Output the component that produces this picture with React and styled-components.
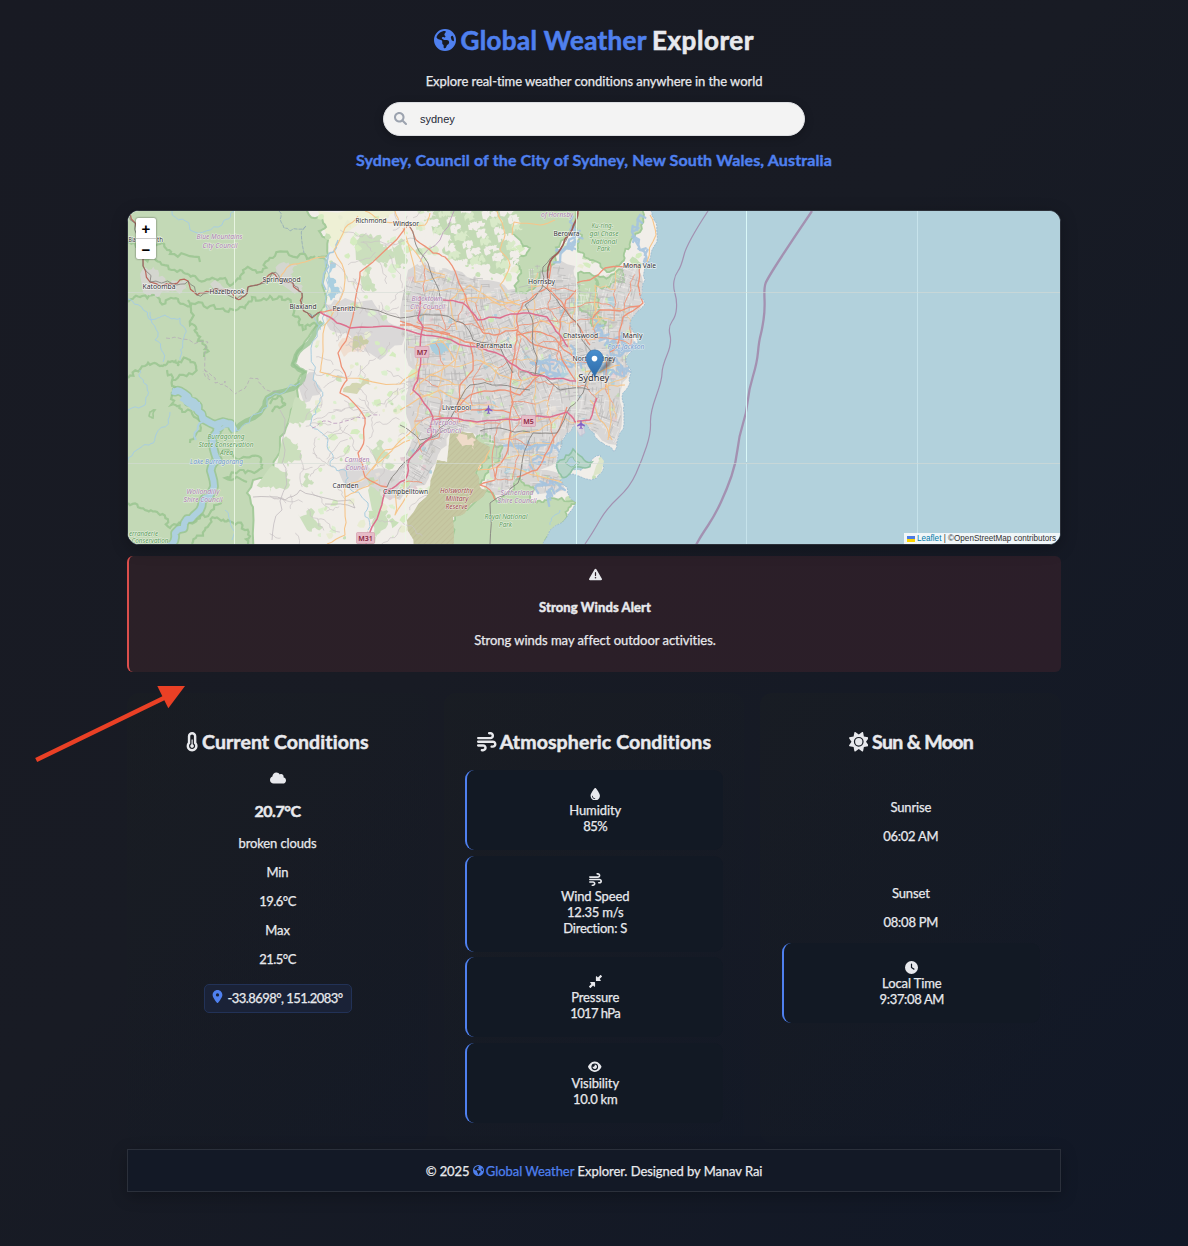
import React from 'react';
import styled, { createGlobalStyle } from 'styled-components';
import {
  FaEarthAmericas, FaTriangleExclamation, FaCloud, FaWind,
  FaDroplet, FaDownLeftAndUpRightToCenter, FaEye, FaSun, FaClock, FaLocationDot,
} from 'react-icons/fa6';

const BLUE = '#4f80ef';
const TEXT = '#e8e9ed';

const GlobalStyle = createGlobalStyle`
  *, *::before, *::after { box-sizing: border-box; }
  body {
    margin: 0;
    min-height: 1246px;
    background: linear-gradient(135deg, #181a23 0%, #181b24 45%, #111827 100%);
    color: ${TEXT};
    font: 400 13px/16px Lato, "Open Sans", sans-serif;
    -webkit-text-stroke: 0.25px currentColor;
  }
  svg { display: block; }
`;

const Page = styled.div`
  position: relative;
  width: 934px;
  height: 1246px;
  margin: 0 auto;
  padding-top: 24px;
`;
const Header = styled.header`
  display: flex;
  flex-direction: column;
  align-items: center;
  height: 186px;
`;
const Title = styled.h1`
  display: flex;
  align-items: center;
  gap: 5px;
  margin: 0;
  font-size: 26px;
  line-height: 32px;
  font-weight: 700;
  letter-spacing: 0.36px;
  -webkit-text-stroke-width: 0.6px;
  white-space: pre;
`;
const Accent = styled.span`
  color: ${BLUE};
`;
const Brand = styled.span`
  display: inline-flex;
  align-items: center;
  gap: ${(p) => p.$gap}px;
  color: ${BLUE};
`;
const Spaced = styled.span`
  letter-spacing: ${(p) => p.$ls}px;
`;
const Subtitle = styled.p`
  margin: 17px 0 13px;
  letter-spacing: -0.06px;
`;
const Search = styled.div`
  display: flex;
  align-items: center;
  gap: 13px;
  width: 422px;
  height: 34px;
  padding-left: 10px;
  border: 1px solid #dcdee2;
  border-radius: 17px;
  background: #f3f3f3;
  color: #1f2937;
  font: 11px/14px "Liberation Sans", sans-serif;
  -webkit-text-stroke-width: 0;
  box-shadow: 0 2px 8px rgba(0, 0, 0, 0.25);
  svg { color: #9ca3af; margin-top: -2px; }
`;
const Place = styled.h2`
  margin: 14px 0 0;
  color: ${BLUE};
  font-size: 16px;
  line-height: 20px;
  letter-spacing: 0.14px;
  -webkit-text-stroke-width: 0.4px;
`;
const MapFrame = styled.section`
  position: relative;
  height: 335px;
  border: 1px solid #2c3039;
  border-radius: 12px;
  overflow: hidden;
  background: #b2d1dc;
  box-shadow: 0 4px 16px rgba(0, 0, 0, 0.25);
  -webkit-text-stroke-width: 0;
`;
const ZoomControl = styled.div`
  position: absolute;
  top: 7px;
  left: 8px;
  width: 20px;
  border-radius: 2px;
  background: #fff;
  box-shadow: 0 0 2px rgba(0, 0, 0, 0.65);
`;
const ZoomButton = styled.div`
  display: flex;
  align-items: center;
  justify-content: center;
  height: ${(p) => (p.$first ? 21 : 20)}px;
  padding-top: 2px;
  border-bottom: ${(p) => (p.$first ? '1px solid #ccc' : 'none')};
  color: #000;
  font: 700 15px/18px "Liberation Sans", sans-serif;
`;
const Attribution = styled.div`
  position: absolute;
  right: 0;
  bottom: 0;
  display: flex;
  align-items: center;
  gap: 2px;
  width: 156px;
  height: 11px;
  padding-left: 3px;
  background: rgba(255, 255, 255, 0.8);
  color: #333;
  font: 8.13px/11px "Liberation Sans", sans-serif;
  white-space: pre;
`;
const LeafletLink = styled.span`
  color: #0078a8;
`;
const Alert = styled.section`
  display: flex;
  flex-direction: column;
  align-items: center;
  height: 116px;
  margin-top: 11px;
  padding-top: 12px;
  border-left: 2px solid #dc4f4c;
  border-radius: 6px;
  background: linear-gradient(120deg, #2b2027, #2b1e29);
`;
const AlertTitle = styled.h3`
  margin: 18px 0 0;
  font-size: 13px;
  line-height: 16px;
  font-weight: 700;
  letter-spacing: 0.1px;
  -webkit-text-stroke-width: 0.5px;
`;
const AlertText = styled.p`
  margin: 17px 0 0;
  letter-spacing: -0.03px;
`;
const Cards = styled.main`
  display: grid;
  grid-template-columns: repeat(3, 1fr);
  gap: 16px;
  margin-top: 21px;
`;
const Card = styled.section`
  display: flex;
  flex-direction: column;
  align-items: center;
  height: 450px;
  padding: 37px 21px 0 21.4px;
  border-radius: 12px;
  background: linear-gradient(135deg, rgba(26, 30, 34, 0.5), rgba(17, 24, 39, 0.3));
`;
const CardTitle = styled.h2`
  display: flex;
  align-items: center;
  gap: ${(p) => p.$gap}px;
  margin: 0;
  font-size: 19.5px;
  line-height: 24px;
  font-weight: 700;
  letter-spacing: ${(p) => p.$ls}px;
  -webkit-text-stroke-width: 0.5px;
  white-space: nowrap;
`;
const CloudIcon = styled(FaCloud)`
  margin-top: 16px;
`;
const Temperature = styled.strong`
  margin: 15px 0 8px;
  font-size: 16px;
  line-height: 20px;
  letter-spacing: -0.48px;
  -webkit-text-stroke-width: 0.5px;
`;
const Reading = styled.p`
  margin: ${(p) => p.$top ?? 13}px 0 0;
  letter-spacing: ${(p) => p.$ls ?? -0.12}px;
`;
const Coordinates = styled.div`
  display: flex;
  align-items: center;
  gap: 4px;
  width: 148px;
  height: 29px;
  margin-top: 17.2px;
  padding-left: 6px;
  border: 1px solid #223257;
  border-radius: 5px;
  background: #1a2237;
  letter-spacing: -0.55px;
  white-space: nowrap;
  svg { color: ${BLUE}; margin-top: -3px; }
`;
const Rows = styled.div`
  display: flex;
  flex-direction: column;
  gap: 5.5px;
  width: 100%;
  margin-top: ${(p) => p.$top}px;
`;
const Row = styled.div`
  display: flex;
  flex-direction: column;
  align-items: center;
  padding: 16px 0;
  border-left: 2px solid ${BLUE};
  border-radius: 9px;
  background: #121924;
`;
const RowIcon = styled.div`
  display: flex;
  align-items: center;
  height: 16px;
`;
const Footer = styled.footer`
  display: flex;
  align-items: center;
  justify-content: center;
  height: 43px;
  margin-top: 6px;
  border: 1px solid #2b303b;
  background: #131926;
  box-shadow: 0 4px 16px rgba(0, 0, 0, 0.25);
  letter-spacing: -0.06px;
  white-space: pre;
`;
const ArrowOverlay = styled.svg`
  position: absolute;
  left: -107px;
  top: 680px;
`;

function SearchIcon() {
  return (
    <svg width="13" height="13" viewBox="0 0 512 512" fill="currentColor">
      <path d="M500.3 443.7l-119.7-119.7c27.22-40.41 40.65-90.9 33.46-144.7C401.8 87.79 326.8 13.32 235.2 1.723C99.01-15.51-15.51 99.01 1.724 235.2c11.6 91.64 86.08 166.7 177.6 178.9c53.8 7.189 104.3-6.236 144.7-33.46l119.7 119.7c15.62 15.62 40.95 15.62 56.57 0C515.9 484.7 515.9 459.3 500.3 443.7zM79.1 208c0-70.58 57.42-128 128-128s128 57.42 128 128c0 70.58-57.42 128-128 128S79.1 278.6 79.1 208z" />
    </svg>
  );
}
function ThermometerIcon() {
  return (
    <svg width="12.2" height="19.5" viewBox="0 0 320 512" fill="currentColor">
      <path d="M176 322.9l.0002-114.9c0-8.75-7.25-16-16-16s-15.1 7.25-15.1 16L144 322.9c-18.62 6.625-32 24.25-32 45.13c0 26.5 21.5 48 48 48s48-21.5 48-48C208 347.1 194.6 329.5 176 322.9zM272 278.5V112c0-61.87-50.12-112-111.1-112S48 50.13 48 112v166.5c-19.75 24.75-32 55.5-32 89.5c0 79.5 64.5 143.1 144 143.1S304 447.5 304 368C304 334 291.8 303.1 272 278.5zM160 448c-44.13 0-80-35.87-80-79.1c0-25.5 12.25-48.88 32-63.75v-192.3c0-26.5 21.5-48 48-48s48 21.5 48 48v192.3c19.75 14.75 32 38.25 32 63.75C240 412.1 204.1 448 160 448z" />
    </svg>
  );
}

/* ---------- map geometry ---------- */
function makeRandom(seed) {
  let s = seed;
  return () => {
    s = (s * 1664525 + 1013904223) % 4294967296;
    return s / 4294967296;
  };
}
const parse = (str) => str.trim().split(/\s+/).map((p) => p.split(',').map(Number));

function roughen(points, amount, depth, rnd) {
  let pts = points;
  for (let d = 0; d < depth; d += 1) {
    const next = [pts[0]];
    for (let i = 1; i < pts.length; i += 1) {
      const [ax, ay] = pts[i - 1];
      const [bx, by] = pts[i];
      const len = Math.hypot(bx - ax, by - ay) || 1;
      const off = ((rnd() - 0.5) * Math.min(len * amount, 8)) / len;
      next.push([(ax + bx) / 2 - (by - ay) * off, (ay + by) / 2 + (bx - ax) * off]);
      next.push([bx, by]);
    }
    pts = next;
  }
  return pts;
}
function path(str, amount = 0, depth = 0, close = false, seed = 7) {
  const pts = depth ? roughen(parse(str), amount, depth, makeRandom(seed)) : parse(str);
  return `M${pts.map((p) => `${p[0].toFixed(1)},${p[1].toFixed(1)}`).join('L')}${close ? 'Z' : ''}`;
}
function smooth(str) {
  const p = parse(str);
  let d = `M${p[0]}`;
  for (let i = 1; i < p.length - 1; i += 1) {
    d += `Q${p[i]} ${(p[i][0] + p[i + 1][0]) / 2},${(p[i][1] + p[i + 1][1]) / 2}`;
  }
  return `${d}L${p[p.length - 1]}`;
}
function inside([x, y], poly) {
  let hit = false;
  for (let i = 0, j = poly.length - 1; i < poly.length; j = i, i += 1) {
    const [xi, yi] = poly[i];
    const [xj, yj] = poly[j];
    if (yi > y !== yj > y && x < ((xj - xi) * (y - yi)) / (yj - yi) + xi) hit = !hit;
  }
  return hit;
}
const LAND = '110,195 652,195 651,211 654,220 657,233 652,250 648,263 645,280 640,297 645,303 638,311 630,323 634,333 638,343 631,352 626,362 631,370 630,383 622,397 624,413 620,433 614,452 603,443 594,433 586,424 574,426 567,433 560,450 556,467 562,474 573,470 588,466 600,455 604,467 597,478 573,474 560,480 567,487 570,498 577,502 567,517 547,537 540,560 110,560';
const FOREST = '110,195 306,195 309,215 322,218 326,227 319,231 328,240 328,255 318,257 327,262 325,293 322,310 316,326 302,348 293,363 305,372 297,390 290,417 280,437 277,457 267,477 253,480 247,493 253,507 252,560 110,560';
const URBAN = '408,270 425,262 440,268 462,272 488,280 508,290 522,285 528,268 545,262 575,266 578,283 600,284 622,266 640,262 644,290 640,310 632,325 634,343 626,356 630,372 620,395 622,420 617,445 590,430 567,433 556,462 540,470 565,478 565,490 540,494 520,480 500,495 485,488 492,450 475,434 450,433 438,455 425,485 400,500 378,496 360,480 372,470 398,470 412,440 405,410 414,370 404,345 400,310';
const SMALL_TOWNS = ['325,305 345,298 372,300 386,318 402,325 402,345 380,360 362,345 347,333 327,325', '140,274 158,270 176,281 188,280 188,290 170,291 158,297 143,292', '210,284 230,287 248,290 238,300 219,296', '270,276 284,262 297,266 292,278 302,285 295,294', '338,470 358,460 372,470 380,486 358,490 343,482', '298,385 315,372 322,390 304,403'];
const PARKS = ['500,222 520,205 578,205 580,225 560,244 556,262 540,272 527,292 516,292 521,270 514,262 530,248 520,240', '577,205 647,205 640,232 630,247 622,262 607,272 590,260 577,250 582,235 575,225', '578,273 600,277 622,270 624,282 604,288 595,278 598,303 593,315 606,322 604,329 592,326 588,313 580,310', '425,205 520,205 525,225 508,236 514,250 505,272 493,274 475,262 460,262 442,250 450,237 432,228', '487,490 497,502 520,478 533,487 533,503 547,500 576,502 567,517 547,537 540,560 450,560 455,513 467,510', '475,440 490,436 503,446 498,462 484,480 474,484 476,472 489,458'];
const GREEN_PATCHES = ['355,240 365,234 382,238 386,250 371,263 356,260', '370,250 386,244 394,252 386,268 373,262', '392,246 405,241 408,260 397,268', '360,275 372,268 377,290 362,288', '294,400 305,400 312,414 300,428 288,424', '282,440 298,443 302,455 288,467 277,465', '268,470 288,470 290,485 270,492 255,488', '300,483 310,474 314,482 305,487', '298,514 315,512 323,527 307,530', '370,448 384,442 390,455 376,462', '368,490 382,490 388,520 370,545 372,510'];
const RESERVE = '450,433 473,433 490,447 488,460 475,473 480,487 487,490 467,510 453,517 448,560 412,560 407,520 430,487 437,460 447,462';

const MOTORWAYS = ['320,312 337,323 350,328 373,327 410,331 440,337 480,347 510,363 533,375 550,379 577,381', '443,300 463,303 478,320 500,318 523,313 547,317 560,335 568,347', '420,296 418,318 423,327 420,350 419,370 413,390 433,417 431,437 409,460 405,480 387,490 380,510 366,544', '432,420 450,418 477,422 517,420 545,417 567,412 575,422 590,420 597,398'];
const TRUNKS = ['407,226 360,272 357,290 350,327 338,353 347,380 340,393 365,418 364,440 358,453 365,477 387,487', '408,224 416,240 433,253 445,257 457,277 467,303 483,333', '400,325 440,333 473,343 500,350', '350,308 335,310 320,312', '550,260 547,288 523,303 517,315 517,340 512,365 513,403 510,425 508,450 497,467 495,480 480,485 490,490 495,500', '547,288 565,308 580,328 590,345', '577,283 590,280 605,268 640,266 638,285 643,303 623,317 617,347 610,352', '593,318 600,310 640,306', '577,289 566,300 560,320 561,345', '483,333 495,335 517,330 535,345 560,352 575,380', '455,412 470,395 500,390 520,395 540,375', '455,412 480,410 510,413', '567,407 548,450 537,470 517,477', '470,342 473,370 460,385 457,410', '517,335 540,332 555,338 575,358', '400,321 420,329 450,334'];
const SECONDARY = ['365,211 378,219 385,222 405,224', '358,216 345,228 334,250 345,280 340,300 325,325 322,360 320,372 345,378 400,384 420,370', '430,213 425,225 400,226 395,211', '403,228 415,282 445,277', '497,211 505,235 500,250 510,265 500,285 508,300 520,305', '520,305 490,297 460,300', '405,240 425,268 445,275', '650,215 656,235 647,262', '592,330 600,320 595,285', '457,330 450,300 470,285 500,305 520,300', '440,340 455,360 430,375', '410,395 430,375 455,385', '365,477 387,455 405,437 420,422', '365,478 345,485 345,510 345,535 327,544', '378,480 358,490 345,497', '400,410 440,390 470,405', '490,450 478,470 500,467 520,470 535,475 567,485', '500,440 540,430 560,415', '480,360 500,375 525,380 545,372', '595,395 610,385 625,385', '590,400 600,420 612,440', '605,380 610,400 608,440', '530,340 540,320 560,330', '585,372 600,372 620,365', '512,235 514,222 540,225 555,220', '395,490 395,515 410,490', '280,279 290,265 305,262 325,257', '410,440 385,450 372,470'];
const RAILS = ['410,227 416,245 430,270 440,297', '355,307 400,318 433,315 463,323 473,340 500,347 513,373', '578,213 572,230 560,250 543,267 542,288 525,305 533,323 537,357 535,375', '542,285 560,305 580,328 582,340 595,360 583,393 570,407 557,433 533,433 523,457 518,483 490,503 490,544', '520,372 545,376 560,390 590,390', '400,425 420,440 435,435 455,410 470,385 500,385 530,390', '387,487 400,467 420,445 450,428', '480,431 500,428 530,432'];
const MOUNTAIN_ROAD = '130,213 137,235 143,260 150,282 173,284 188,281 197,295 210,292 223,290 237,299 243,297 248,287 260,284 272,273 282,281 293,283 302,293 302,308 312,318 320,312';
const LAKE = '172,391 183,393 198,406 207,421 223,422 235,431';
const LAKE_SOUTH = '219,424 217,432 213,445 218,460 212,475 209,497 200,510 187,519 175,533 168,546';
const STREAMS = ['120,300 147,312 150,320 165,315 180,318 183,340 180,360', '120,415 145,405 147,385 140,370', '120,470 140,448 155,438 170,412', '172,211 190,230 222,225 235,211', '300,383 267,398 262,412 235,431', '328,255 326,295 317,330 313,380 320,402 310,425 328,440 330,465 345,470 345,486 368,503 368,530', '150,312 155,340 163,362', '310,315 320,330', '225,510 232,540', '550,525 560,510'];
const BOUNDARY_NEAR = '708,211 687,243 681,267 675,275 673,287 677,300 676,316 668,327 672,343 662,367 662,380 650,413 651,433 642,460 630,487 607,508 593,532 585,544';
const BOUNDARY_FAR = '812,211 797,233 767,279 764,288 765,310 762,330 759,341 757,363 749,389 746.5,413 739,436 736,463 727,489 715,515 701,536 696,545';

const urbanPoly = parse(URBAN);
const landPoly = parse(LAND);
const forestPoly = parse(FOREST);
function buildStreets() {
  const rnd = makeRandom(42);
  const grey = [];
  const white = [];
  for (let i = 0; i < 2600; i += 1) {
    const x = 398 + rnd() * 250;
    const y = 262 + rnd() * 236;
    const tilt = 0.25 * Math.sin(x / 30) + 0.3 * Math.cos(y / 37) + (rnd() < 0.5 ? Math.PI / 2 : 0);
    const len = 3 + rnd() * 11;
    const x2 = x + Math.cos(tilt) * len;
    const y2 = y + Math.sin(tilt) * len;
    if (inside([x, y], urbanPoly) && inside([x2, y2], urbanPoly)) {
      (rnd() < 0.5 ? grey : white).push(`M${x.toFixed(1)},${y.toFixed(1)}L${x2.toFixed(1)},${y2.toFixed(1)}`);
    }
  }
  return [grey.join(''), white.join('')];
}
/* arterial network: jittered nodes linked to their right and lower neighbours */
function buildArterials() {
  const rnd = makeRandom(314);
  const step = 19;
  const nodes = [];
  for (let r = 0; r < 13; r += 1) {
    nodes.push(Array.from({ length: 13 }, (_, c) => [402 + c * step + (rnd() - 0.5) * 13, 268 + r * step + (rnd() - 0.5) * 13]));
  }
  const out = { major: '', minor: '' };
  const link = (a, b, seed) => {
    if (!b || !inside(a, urbanPoly) || !inside(b, urbanPoly)) return;
    const roll = rnd();
    if (roll > 0.8) return;
    out[roll < 0.3 ? 'major' : 'minor'] += path(`${a} ${b}`, 0.35, 2, false, seed);
  };
  nodes.forEach((row, r) => row.forEach((n, c) => {
    link(n, row[c + 1], r * 31 + c);
    link(n, nodes[r + 1] && nodes[r + 1][c], r * 37 + c + 500);
  }));
  return out;
}
function buildPatches() {
  const rnd = makeRandom(99);
  const list = [];
  const colors = ['#cbe6b6', '#d5edc3', '#c3d9b6', '#e6e0d9', '#cfcdc9', '#e2ccd0', '#b2d1dc'];
  for (let i = 0; i < 760; i += 1) {
    const x = 315 + rnd() * 330;
    const y = 213 + rnd() * 328;
    const urban = inside([x, y], urbanPoly);
    if (!inside([x, y], landPoly) || (!urban && rnd() < 0.35) || inside([x, y], forestPoly)) continue;
    const c = urban ? colors[Math.floor(rnd() * 7)] : ['#d5ecc0', '#c8e0b8', '#dcefce', '#e8ecd2'][Math.floor(rnd() * 4)];
    const r = 1.2 + rnd() * (urban ? 3 : 3.6);
    const pts = Array.from({ length: 7 }, (_, k) => {
      const a = (k / 7) * Math.PI * 2;
      const q = r * (0.5 + rnd() * 0.8);
      return `${(x + Math.cos(a) * q).toFixed(1)},${(y + Math.sin(a) * q).toFixed(1)}`;
    });
    list.push({ d: `M${pts.join('L')}Z`, c });
  }
  return list;
}
function buildRural() {
  const rnd = makeRandom(5);
  let d = '';
  for (let i = 0; i < 130; i += 1) {
    const x = 265 + rnd() * 150;
    const y = 215 + rnd() * 325;
    if (inside([x, y], forestPoly) || inside([x, y], urbanPoly)) continue;
    const a = rnd() * 6.28;
    const l = 10 + rnd() * 28;
    const end = [x + Math.cos(a) * l, y + Math.sin(a) * l];
    if (inside(end, forestPoly)) continue;
    d += path(`${x},${y} ${end}`, 0.5, 3, false, i + 3);
  }
  return d;
}
function buildInlets() {
  const rnd = makeRandom(21);
  let d = '';
  const arms = ['642,343 625,350 612,357 597,363 580,362 562,365 545,360 533,364', '560,375 550,372 540,368', '612,357 620,372 628,368', '615,350 608,340 601,330 597,322', '625,346 622,336', '580,362 575,350', '596,363 605,372 620,375', '510,445 525,450 545,445 558,450', '530,465 545,455', '535,488 550,484 565,490', '548,500 552,488', '570,222 575,240 562,250', '640,215 632,232 640,250 646,262', '560,262 577,236'];
  arms.forEach((arm) => {
    roughen(parse(arm), 0.5, 2, rnd).forEach(([x, y]) => {
      const a = rnd() * 6.28;
      d += `M${x.toFixed(1)},${y.toFixed(1)}l${(Math.cos(a) * 6).toFixed(1)},${(Math.sin(a) * 6).toFixed(1)}`;
    });
    d += path(arm, 0.5, 2, false, 31);
  });
  return d;
}
const [streetsGrey, streetsWhite] = buildStreets();
const arterials = buildArterials();
const patches = buildPatches();
const rural = buildRural();
const inlets = buildInlets();

const TOWNS = [
  ['Richmond', 371, 223, 31], ['Windsor', 406, 226, 26], ['Katoomba', 159, 289, 33], ['Hazelbrook', 227, 294, 35],
  ['Springwood', 281.5, 282, 38], ['Blaxland', 303, 308.5, 27], ['Penrith', 344, 311, 23], ['Berowra', 566.5, 236, 26],
  ['Mona Vale', 639.5, 267.5, 33], ['Hornsby', 541.5, 283.5, 27], ['Chatswood', 580.5, 338, 35], ['Manly', 632.5, 338, 20],
  ['Parramatta', 494, 348, 36], ['North Sydney', 594, 360.5, 43], ['Liverpool', 456.5, 409.5, 29], ['Camden', 345.5, 488, 26], ['Campbelltown', 405.5, 494, 45],
  ['Bla', 132, 242, 7], ['th', 160, 242, 6],
];
const REGIONS = [
  ['Blue Mountains', 219.5, 239, 46, 0], ['City Council', 220, 247.5, 35, 0], ['Blacktown', 427, 301, 31, 0], ['City Council', 427.5, 308.5, 35, 0],
  ['Liverpool', 444, 424.5, 28, 0], ['City Council', 444, 432.5, 35, 0], ['Camden', 357, 461.5, 25, 0], ['Council', 356.5, 470, 22, 0],
  ['Wollondilly', 203, 494, 33, 0], ['Shire Council', 203, 501.5, 39, 0], ['Sutherland', 517, 495, 33, 0], ['Shire Council', 517, 503, 39, 0],
  ['of Hornsby', 557, 216.5, 32, 0],
  ['Burragorang', 226, 438.5, 37, 1], ['State Conservation', 226, 446.5, 55, 1], ['Area', 226.5, 454.5, 13, 1],
  ['Ku-ring-', 602.5, 227.5, 22, 1], ['gai Chase', 604, 235.5, 29, 1], ['National', 604, 243.5, 26, 1], ['Park', 603.5, 251, 13, 1],
  ['Royal National', 506, 518.5, 43, 1], ['Park', 505.5, 526.5, 13, 1], ['erranderie', 143.5, 536, 29, 1], ['Conservation', 150, 542.9, 37, 1],
  ['Lake Burragorang', 216.5, 463.5, 53, 2], ['Port Jackson', 626, 349, 37, 2],
  ['Holsworthy', 456.5, 492.5, 33, 3], ['Military', 457, 500.5, 23, 3], ['Reserve', 456.5, 508.5, 22, 3],
];
const REGION_COLORS = ['#ab7fae', '#5b9b58', '#6f97cb', '#a1464c'];
const SHIELDS = [['M7', 422, 352], ['M5', 528.5, 421], ['M31', 365.5, 538]];
const PLANE = 'M0,-4.2C.6,-4.2 .7,-3 .7,-1.4L4,1V2L.7,1V3L1.7,3.8V4.4L0,4L-1.7,4.4V3.8L-.7,3V1L-4,2V1L-.7,-1.4C-.7,-3 -.6,-4.2 0,-4.2Z';
const CONTOURS = [
  '143,258 160,262 180,270 195,276 215,279 233,284 243,270 262,272 275,256 300,254 315,256',
  '128,302 142,296 160,302 178,299 195,304 220,309 240,307 252,297 270,296 285,300 293,315 303,330 318,326',
  '188,300 190,325 197,333 205,345 204,357',
  '128,378 145,366 160,366 170,362 178,366 190,360 195,372 172,380',
  '128,242 140,248 160,244 170,254 200,262',
  '128,503 145,510 160,515 170,528 190,523 205,517 222,500',
  '192,544 205,530 215,518 228,520 245,530 248,544',
  '222,450 235,458 258,456 262,468 240,470 225,478 247,482',
  '167,370 175,387 171,405 185,412 200,425 190,443',
  '270,404 282,398 285,405 272,412',
];

function Lines({ items, color, width }) {
  return items.map((l, i) => (
    <path key={l} d={path(l, 0.18, 2, false, i + 11)} fill="none" stroke={color} strokeWidth={width} strokeLinejoin="round" />
  ));
}

function SydneyMap() {
  const forest = path(FOREST, 0.35, 2, true, 3);
  return (
    <svg width="932" height="333" viewBox="128 211 932 333" fontFamily="Noto Sans, sans-serif">
      <defs>
        <pattern id="hatch" width="4" height="4" patternUnits="userSpaceOnUse" patternTransform="rotate(45)">
          <path d="M0,0V4" stroke="#bcb894" strokeWidth="1.6" />
        </pattern>
        <linearGradient id="pin" x1="0" y1="0" x2="0" y2="1">
          <stop offset="0" stopColor="#4a90cf" />
          <stop offset="1" stopColor="#2c6aa8" />
        </linearGradient>
        <filter id="soft"><feGaussianBlur stdDeviation="1.4" /></filter>
        <clipPath id="landClip"><path d={path(LAND, 0.3, 2, true, 13)} /></clipPath>
      </defs>
      <rect x="128" y="211" width="932" height="333" fill="#b2d1dc" />
      <g clipPath="url(#landClip)">
        <rect x="128" y="211" width="560" height="333" fill="#f1eee9" />
        <path d={path('318,211 395,211 385,221 360,223 335,250 328,240', 0.3, 2, true)} fill="#eef0d5" />
        <path d={path(URBAN, 0.3, 2, true)} fill="#d9d7d6" />
        {SMALL_TOWNS.filter((_, i) => i === 0 || i > 3).map((p) => <path key={p} d={path(p, 0.5, 2, true)} fill="#dad8d8" />)}
        <path d={forest} fill="#c3d9b6" stroke="#a5cb9b" strokeWidth="2" />
        {GREEN_PATCHES.map((p) => <path key={p} d={path(p, 0.9, 3, true)} fill="#cbdfbd" />)}
        {patches.map((p) => <path key={p.d} d={p.d} fill={p.c} />)}
        {PARKS.map((p, i) => (
          <path key={p} d={path(p, 0.6, 3, true, i + 2)} fill="#c3dab5" stroke={i === 3 ? 'none' : '#a3ca99'} strokeWidth="1.8" />
        ))}
        {Array.from({ length: 95 }, (_, i) => {
          const rnd = makeRandom(i * 7919 + 3);
          rnd();
          const x = 412 + rnd() * 105;
          const y = 206 + rnd() * 62;
          return <path key={i} d={path(`${x},${y} ${x + 5},${y - 3} ${x + 7},${y + 3} ${x + 1},${y + 5}`, 1, 2, true, i + 1)} fill={i % 3 ? '#f1eee9' : '#d9eac9'} />;
        })}
        <path d={path('338,345 345,338 356,334 368,340 366,347 354,352 344,357', 0.5, 2, true)} fill="#f0ded0" />
        <path d={path('353,339 361,335 369,341 361,349 352,352', 0.6, 2, true)} fill="#c9cda5" />
        <path d={path('343,392 352,383 368,378 371,385 357,394', 0.5, 2, true)} fill="#d3d6b2" />
        <path d={path(RESERVE, 0.3, 2, true)} fill="#c6c8a2" />
        <path d={path(RESERVE, 0.3, 2, true)} fill="url(#hatch)" opacity=".6" />
        <path d={path('456,437 462,434 476,440 474,450 466,445 460,443', 0.8, 2, true)} fill="#efdbc9" />

        {/* forest contours */}
        {CONTOURS.map((c, i) => <path key={c} d={path(c, 0.8, 3, false, i + 7)} fill="none" stroke="#a0c896" strokeWidth="2.2" />)}
        <path d={path('150,412 155,410 153,418 149,416', 0.3, 2, true)} fill="none" stroke="#a0c896" strokeWidth="1.6" />
        <g fill="none" stroke="#93c28e" strokeWidth="9.5" strokeLinejoin="round" opacity=".75">
          <path d={path(LAKE, 0.5, 2)} />
          <path d={path(LAKE_SOUTH, 0.5, 2)} />
          <path d={path('235,431 260,413 267,398 300,383 305,370', 0.2, 2)} strokeWidth="5" />
          <path d={path('322,322 302,348 293,365 305,373', 0.2, 2)} strokeWidth="5" />
        </g>
        {SMALL_TOWNS.slice(1, 4).map((p) => <path key={p} d={path(p, 0.8, 3, true)} fill="#d4d6cf" />)}
        {STREAMS.map((s, i) => <path key={s} d={path(s, 0.5, 3, false, i + 4)} fill="none" stroke="#a8cde0" strokeWidth="1" />)}
        <g fill="none" stroke="#aed0df" strokeLinejoin="round">
          <path d={path(LAKE, 0.5, 2)} strokeWidth="6.5" />
          <path d={path(LAKE_SOUTH, 0.5, 2)} strokeWidth="6" />
          <path d={path('182,396 190,402 200,407', 0.3, 2)} strokeWidth="10" />
          <path d={path('219,430 232,424 236,431', 0.3, 2)} strokeWidth="3" />
          <path d={path('205,416 198,426 196,440', 0.4, 2)} strokeWidth="2" />
        </g>
        <path d={path('330,265 333,262 336,280 341,293 335,298 327,296 328,280', 0.9, 3, true)} fill="#abcfe0" />
        <path d={path('338,240 328,258 326,290', 0.4, 3)} fill="none" stroke="#a8c9de" strokeWidth="1.6" />
        <path d={path('166,338 182,339 208,342 205,358 210,380 203,371', 0.3, 2)} fill="none" stroke="#b3a6b8" strokeWidth=".7" strokeDasharray="4 2" />
        <path d={path('204,370 215,383 225,381 235,394 250,378 262,385 280,392', 0.6, 2)} fill="none" stroke="#b3a6b8" strokeWidth=".7" strokeDasharray="4 2" />
        <path d={path('279,211 281,222 290,231 306,226 304,253', 0.4, 2)} fill="none" stroke="#8aa2b8" strokeWidth=".7" strokeDasharray="4 1" />
        <path d={path('454,211 440,240 420,262', 0.2, 2)} fill="none" stroke="#b995bb" strokeWidth=".8" />
        <path d={path('312,428 328,421 350,420 380,415', 0.3, 2)} fill="none" stroke="#b995bb" strokeWidth=".8" strokeDasharray="4 2" />
        <path d={rural} fill="none" stroke="#cac4c5" strokeWidth=".7" />
        <path d={path('253,497 285,500 300,490 325,498 350,500 355,508 325,504', 0.2, 2)} fill="none" stroke="#bdb6b9" strokeWidth=".8" />
        <path d={path('280,410 285,450 286,475 282,510 272,540', 0.3, 2)} fill="none" stroke="#c3bdc0" strokeWidth=".8" />
        <path d={streetsWhite} stroke="#efedeb" strokeWidth=".7" fill="none" opacity=".8" />
        <path d={streetsGrey} stroke="#b9b7b8" strokeWidth=".7" fill="none" />
        <path d={path('429,344 438,341 450,344 449,351 441,355 432,351', 0.4, 2, true)} fill="#a9cddd" />
        <path d={inlets} fill="none" stroke="#a4c3df" strokeWidth="2.3" strokeLinecap="round" opacity=".9" />
        <path d={arterials.minor} fill="none" stroke="#f3c792" strokeWidth="1" />
        <path d={arterials.major} fill="none" stroke="#eb9c84" strokeWidth="1" />
        <Lines items={SECONDARY} color="#f6c58a" width={1.1} />
        <Lines items={TRUNKS} color="#ee9277" width={1.3} />
        <Lines items={RAILS} color="#86827f" width={0.9} />
        <Lines items={MOTORWAYS} color="#dd6f8e" width={1.5} />
        <path d={path(MOUNTAIN_ROAD, 0.4, 2)} fill="none" stroke="#b9665c" strokeWidth="1.2" />
        <path d={path(MOUNTAIN_ROAD, 0.6, 2, false, 77)} fill="none" stroke="#77736f" strokeWidth=".7" />
        <path d={path('578,211 572,230 560,250 550,262 548,285', 0.15, 2)} fill="none" stroke="#a05d56" strokeWidth="1.6" />
      </g>
      <path d={path(LAND, 0.3, 2, false, 13)} fill="none" stroke="#8fb2cd" strokeWidth=".7" strokeDasharray="2 1" />
      <path d={path('557,468 566,455 573,449 582,457 592,462 585,468 572,470 566,477 559,473', 0.5, 2, true)} fill="#b5d4c8" stroke="#8fc2a5" strokeWidth="1.6" />
      <path d={path('565,463 573,457 580,463 571,467', 0.4, 2, true)} fill="#b2d1dc" stroke="#8fc2a5" />
      <path d="M574,424h9l2,9-5,3zM582,429v8" fill="#d8d6de" stroke="#c5bfd2" strokeWidth=".6" />
      <path d="M596,466l5-9 3,4-3,12-8,3z" fill="#dde5c9" />

      <g fill="none" stroke="#a391b1">
        <path d={smooth(BOUNDARY_NEAR)} strokeWidth="1.2" />
        <path d={smooth(BOUNDARY_FAR)} strokeWidth="2.3" />
      </g>

      {/* tile seams */}
      <g stroke="#ecf7e6" strokeWidth="1">
        <path d="M234.5,211V544M405.5,211V544M576.5,211V463" opacity=".9" />
        <path d="M576.5,463V544M746.5,211V462" stroke="#d9f8f8" />
        <path d="M917.5,211V544M746.5,464V544" stroke="#cce8ef" opacity=".8" />
        <path d="M128,292.5H1060M128,463.5H1060" stroke="#d5dcd6" opacity=".6" />
      </g>

      {SHIELDS.map(([t, x, y]) => (
        <g key={t}>
          <rect x={x - (t.length > 2 ? 9 : 7)} y={y - 5.5} width={t.length > 2 ? 18 : 14} height="11" rx="1" fill="#e6bcc8" stroke="#d295a7" strokeWidth=".6" />
          <text x={x} y={y + 2.6} fontSize="7" fontWeight="600" textAnchor="middle" fill="#8a2540">{t}</text>
        </g>
      ))}
      <g fill="#8461c4">
        <path d={PLANE} transform="translate(488.5,409.5)" />
        <path d={PLANE} transform="translate(581,424.5)" />
      </g>
      <g fontSize="6.6" textAnchor="middle" paintOrder="stroke" strokeLinejoin="round">
        {REGIONS.map(([t, x, y, w, k]) => (
          <text key={t + y + x} x={x} y={y} fontStyle="italic" fill={REGION_COLORS[k]} stroke="#fff" strokeOpacity=".55" strokeWidth="1.2" textLength={w} lengthAdjust="spacingAndGlyphs">{t}</text>
        ))}
        {TOWNS.map(([t, x, y, w]) => (
          <text key={t} x={x} y={y} fill="#35353a" stroke="#fff" strokeOpacity=".65" strokeWidth="1.5" textLength={w} lengthAdjust="spacingAndGlyphs">{t}</text>
        ))}
        <text x="593.7" y="381" fontSize="9" fill="#303035" stroke="#fff" strokeOpacity=".65" strokeWidth="1.5" textLength="31" lengthAdjust="spacingAndGlyphs">Sydney</text>
      </g>
      <path d="M595,376L610,358Q614,362 609,367Z" fill="#222" opacity=".45" filter="url(#soft)" />
      <path d="M594.6,377C592.6,371 586.3,365.3 586.3,358.2A8.3,8.3 0 0 1 602.9,358.2C602.9,365.3 596.6,371 594.6,377Z" fill="url(#pin)" stroke="#2f70ad" strokeWidth=".7" />
      <circle cx="594.5" cy="358.6" r="2.8" fill="#fff" />
    </svg>
  );
}

function Metric({ icon, label, lines, ls }) {
  return (
    <Row>
      <RowIcon>{icon}</RowIcon>
      <Spaced $ls={-0.1}>{label}</Spaced>
      {lines.map((l) => <Spaced key={l} $ls={ls ?? -0.2}>{l}</Spaced>)}
    </Row>
  );
}

export default function App() {
  return (
    <>
      <GlobalStyle />
      <Page>
        <Header>
          <Title>
            <Brand $gap={4.5}><FaEarthAmericas size={22} /><Accent>Global Weather</Accent></Brand>
            <Spaced $ls={0.55}>Explorer</Spaced>
          </Title>
          <Subtitle>Explore real-time weather conditions anywhere in the world</Subtitle>
          <Search><SearchIcon />sydney</Search>
          <Place>Sydney, Council of the City of Sydney, New South Wales, Australia</Place>
        </Header>
        <MapFrame>
          <SydneyMap />
          <ZoomControl>
            <ZoomButton $first>+</ZoomButton>
            <ZoomButton>−</ZoomButton>
          </ZoomControl>
          <Attribution>
            <svg width="8" height="6" viewBox="0 0 8 6"><path fill="#4c7be1" d="M0 0h8v3H0z" /><path fill="#ffd500" d="M0 3h8v3H0z" /></svg>
            <span><LeafletLink>Leaflet</LeafletLink> | ©OpenStreetMap contributors</span>
          </Attribution>
        </MapFrame>
        <Alert>
          <FaTriangleExclamation size={13} />
          <AlertTitle>Strong Winds Alert</AlertTitle>
          <AlertText>Strong winds may affect outdoor activities.</AlertText>
        </Alert>
        <Cards>
          <Card>
            <CardTitle $gap={3.5} $ls={0.08}><ThermometerIcon />Current Conditions</CardTitle>
            <CloudIcon size={16} />
            <Temperature>20.7°C</Temperature>
            <Reading $top={6}>broken clouds</Reading>
            <Reading>Min</Reading>
            <Reading $ls={-0.5}>19.6°C</Reading>
            <Reading>Max</Reading>
            <Reading $top={12.5} $ls={-0.5}>21.5°C</Reading>
            <Coordinates><FaLocationDot size={13} />-33.8698°, 151.2083°</Coordinates>
          </Card>
          <Card>
            <CardTitle $gap={3} $ls={0.1}><FaWind size={19.5} />Atmospheric Conditions</CardTitle>
            <Rows $top={16.2}>
              <Metric icon={<FaDroplet size={12.5} />} label="Humidity" lines={['85%']} ls={-0.5} />
              <Metric icon={<FaWind size={13} />} label="Wind Speed" lines={['12.35 m/s', 'Direction: S']} />
              <Metric icon={<FaDownLeftAndUpRightToCenter size={13} />} label="Pressure" lines={['1017 hPa']} ls={-0.6} />
              <Metric icon={<FaEye size={13.5} />} label="Visibility" lines={['10.0 km']} ls={-0.3} />
            </Rows>
          </Card>
          <Card>
            <CardTitle $gap={4} $ls={-0.65}><FaSun size={19.5} />Sun &amp; Moon</CardTitle>
            <Reading $top={45}>Sunrise</Reading>
            <Reading $ls={-0.25}>06:02 AM</Reading>
            <Reading $top={41.2}>Sunset</Reading>
            <Reading $ls={-0.25}>08:08 PM</Reading>
            <Rows $top={13}>
              <Metric icon={<FaClock size={13} />} label="Local Time" lines={['9:37:08 AM']} ls={-0.35} />
            </Rows>
          </Card>
        </Cards>
        <Footer>
          © 2025 <Brand $gap={2}><FaEarthAmericas size={11} />Global Weather</Brand> Explorer. Designed by Manav Rai
        </Footer>
        <ArrowOverlay width="170" height="90" viewBox="20 680 170 90">
          <path d="M36.2,760L166,697" stroke="#ea4025" strokeWidth="4.6" />
          <path d="M157.3,686H185L168.3,708.3Z" fill="#ea4025" />
        </ArrowOverlay>
      </Page>
    </>
  );
}
